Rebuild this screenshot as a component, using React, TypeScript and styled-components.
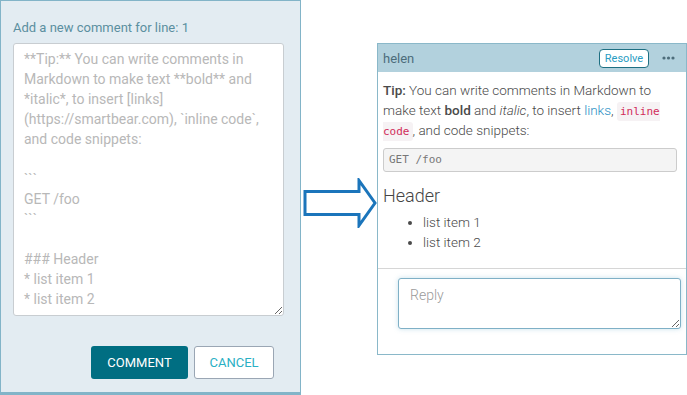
import styled, { createGlobalStyle } from "styled-components";

const GlobalStyle = createGlobalStyle`
  html, body {
    margin: 0;
    padding: 0;
    background: #ffffff;
    font-family: Roboto, "Liberation Sans", sans-serif;
  }
`;

const placeholderText =
  "**Tip:** You can write comments in Markdown to make text **bold** and *italic*, to insert [links] (https://smartbear.com), `inline code`, and code snippets:\n\n```\nGET /foo\n```\n\n### Header\n* list item 1\n* list item 2";

export default function App() {
  return (
    <>
      <GlobalStyle />
      <Page>
        <EditorPanel>
          <EditorLabel>Add a new comment for line: 1</EditorLabel>
          <EditorArea placeholder={placeholderText} />
          <ButtonRow>
            <PrimaryBtn>COMMENT</PrimaryBtn>
            <SecondaryBtn>CANCEL</SecondaryBtn>
          </ButtonRow>
        </EditorPanel>

        <ArrowBox>
          <svg width="76" height="50" viewBox="0 0 76 50">
            <path
              d="M4 13.5 H58 V2.5 L74 25 L58 47.5 V36.5 H4 Z"
              fill="none"
              stroke="#1b75bb"
              strokeWidth="3"
              strokeLinejoin="miter"
            />
          </svg>
        </ArrowBox>

        <CommentCard>
          <CardHeader>
            <Author>helen</Author>
            <ResolveBtn>Resolve</ResolveBtn>
            <MoreIcon width="13" height="4" viewBox="0 0 13 4">
              <circle cx="2" cy="2" r="1.6" fill="#4d6d7b" />
              <circle cx="6.5" cy="2" r="1.6" fill="#4d6d7b" />
              <circle cx="11" cy="2" r="1.6" fill="#4d6d7b" />
            </MoreIcon>
          </CardHeader>
          <CardBody>
            <Para>
              <b>Tip:</b> You can write comments in Markdown to make text{" "}
              <b>bold</b> and <i>italic</i>, to insert <Link>links</Link>,{" "}
              <InlineCode>inline code</InlineCode>, and code snippets:
            </Para>
            <CodeBlock>GET /foo</CodeBlock>
            <Heading>Header</Heading>
            <List>
              <li>list item 1</li>
              <li>list item 2</li>
            </List>
          </CardBody>
          <ReplyRow>
            <ReplyArea placeholder="Reply" />
          </ReplyRow>
        </CommentCard>
      </Page>
    </>
  );
}

const Page = styled.div`
  display: flex;
  align-items: flex-start;
  width: 687px;
  height: 395px;
`;

const EditorPanel = styled.div`
  box-sizing: border-box;
  width: 301px;
  height: 395px;
  background: #e3ecf2;
  border: 1px solid #82b4c8;
  border-bottom: 3px solid #82b4c8;
  padding: 17px 16px 0 12px;
  display: flex;
  flex-direction: column;
`;

const EditorLabel = styled.div`
  font-size: 13px;
  color: #5b8fa0;
  line-height: 20px;
  margin-bottom: 5px;
`;

const EditorArea = styled.textarea`
  box-sizing: border-box;
  width: 271px;
  height: 273px;
  border: 1px solid #c8cdd1;
  border-radius: 3px;
  background: #ffffff;
  padding: 5px 10px;
  font-family: Roboto, "Liberation Sans", sans-serif;
  font-size: 14px;
  line-height: 20px;
  resize: vertical;
  outline: none;

  &::placeholder {
    color: #b8b8b8;
  }
`;

const ButtonRow = styled.div`
  display: flex;
  justify-content: flex-end;
  gap: 6px;
  margin-top: 30px;
  padding-right: 10px;
`;

const PrimaryBtn = styled.button`
  width: 97px;
  height: 33px;
  border: none;
  border-radius: 3px;
  background: #006e82;
  color: #ffffff;
  font-family: Roboto, "Liberation Sans", sans-serif;
  font-size: 13px;
`;

const SecondaryBtn = styled.button`
  width: 80px;
  height: 33px;
  border: 1px solid #9aa6b4;
  border-radius: 3px;
  background: #ffffff;
  color: #2ab0c4;
  font-family: Roboto, "Liberation Sans", sans-serif;
  font-size: 13px;
`;

const ArrowBox = styled.div`
  width: 76px;
  height: 50px;
  margin-top: 178px;
  display: flex;
`;

const CommentCard = styled.div`
  box-sizing: border-box;
  width: 310px;
  height: 312px;
  margin-top: 43px;
  border: 1px solid #8ab8c9;
  background: #ffffff;
  display: flex;
  flex-direction: column;
`;

const CardHeader = styled.div`
  height: 28px;
  background: #b2d1dd;
  display: flex;
  align-items: center;
  padding: 0 11px 0 5px;
`;

const Author = styled.span`
  flex: 1;
  font-size: 13px;
  color: #4d6d7b;
`;

const ResolveBtn = styled.button`
  height: 19px;
  width: 50px;
  padding: 0;
  border: 1px solid #1e6f82;
  border-radius: 4px;
  background: #ffffff;
  color: #2a9cc2;
  font-family: Roboto, "Liberation Sans", sans-serif;
  font-size: 11px;
  line-height: 15px;
`;

const MoreIcon = styled.svg`
  margin-left: 13px;
  display: block;
`;

const CardBody = styled.div`
  box-sizing: border-box;
  padding: 8px 9px 0 5px;
  height: 197px;
  border-bottom: 1px solid #d6d6d6;
`;

const Para = styled.div`
  font-size: 13.5px;
  line-height: 20px;
  color: #4a4a4a;
  font-weight: 300;

  b {
    font-weight: 500;
  }
`;

const Link = styled.span`
  color: #2a8fc4;
`;

const InlineCode = styled.code`
  font-family: "DejaVu Sans Mono", "Liberation Mono", monospace;
  font-size: 11px;
  line-height: 1;
  color: #d12c5a;
  background: #f6f2f4;
  padding: 3px 3px;
  border-radius: 3px;
`;

const CodeBlock = styled.div`
  margin-top: 8px;
  height: 24px;
  box-sizing: border-box;
  border: 1px solid #cccccc;
  border-radius: 3px;
  background: #f4f4f4;
  padding: 0 5px;
  font-family: "DejaVu Sans Mono", "Liberation Mono", monospace;
  font-size: 11px;
  line-height: 22px;
  color: #777;
`;

const Heading = styled.div`
  margin-top: 11px;
  font-size: 18px;
  font-weight: 300;
  color: #444;
  line-height: 26px;
`;

const List = styled.ul`
  margin: 3px 0 0;
  padding-left: 40px;
  font-size: 13.5px;
  line-height: 20px;
  color: #4a4a4a;
  font-weight: 300;
`;

const ReplyRow = styled.div`
  padding: 9px 5px 0 20px;
`;

const ReplyArea = styled.textarea`
  box-sizing: border-box;
  width: 283px;
  height: 51px;
  border: 1px solid #7fb0c6;
  border-radius: 3px;
  box-shadow: 0 0 5px rgba(100, 170, 200, 0.35);
  padding: 8px 11px;
  font-family: Roboto, "Liberation Sans", sans-serif;
  font-size: 14px;
  font-weight: 300;
  outline: none;

  &::placeholder {
    color: #9a9a9a;
  }
`;
